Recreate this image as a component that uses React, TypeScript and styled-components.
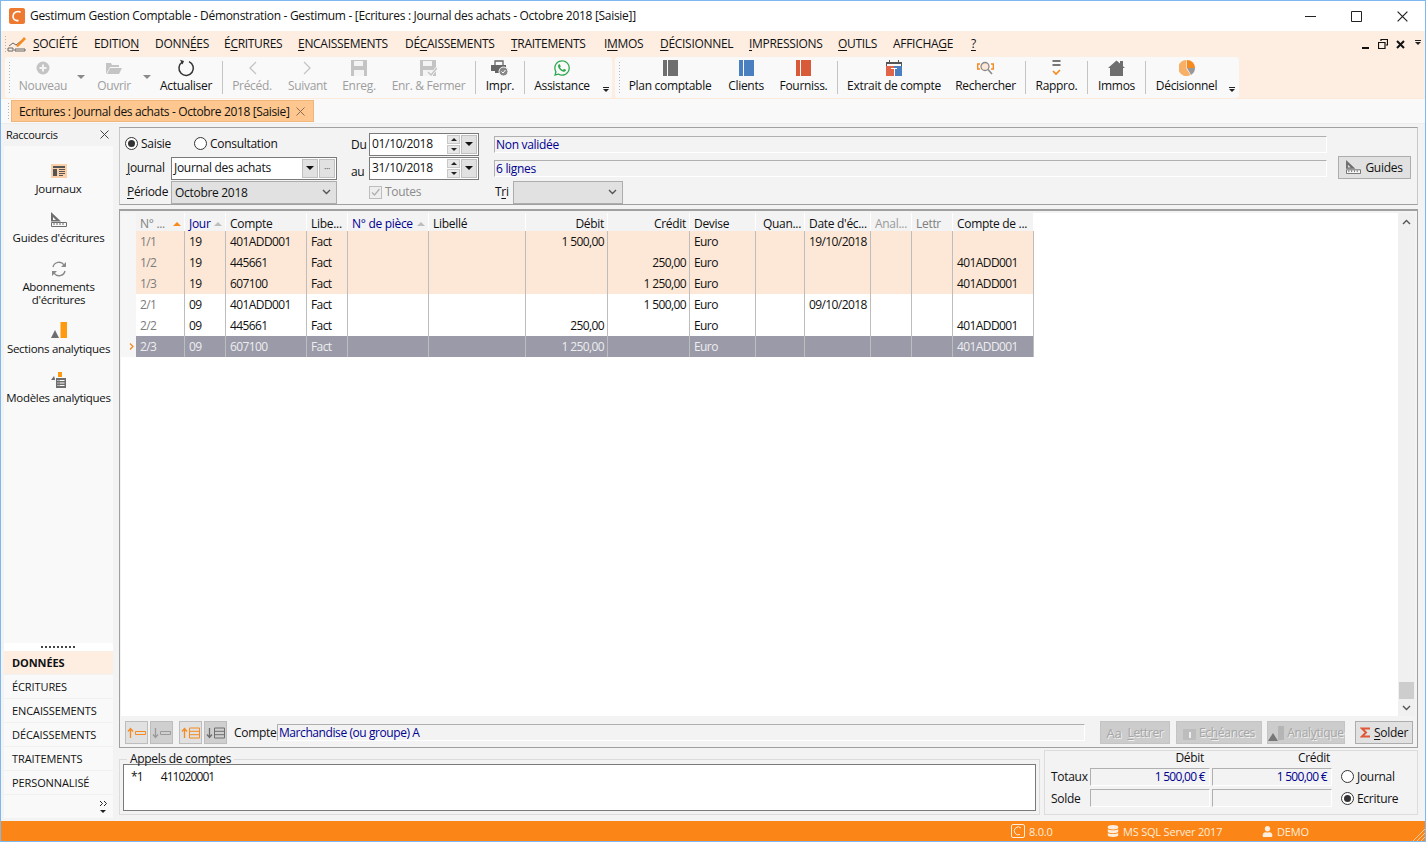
import React from 'react';
import styled, { createGlobalStyle } from 'styled-components';
import { FaWhatsapp, FaDatabase, FaUser } from 'react-icons/fa';

const GlobalStyle = createGlobalStyle`
  html, body { margin: 0; padding: 0; background: #fff; }
  body {
    font-family: "Open Sans", "Liberation Sans", sans-serif;
    font-size: 12px;
    letter-spacing: -0.3px;
    color: #111;
  }
  * { box-sizing: border-box; }
  u { text-underline-offset: 2px; }
`;

const Win = styled.div`
  width: 1426px;
  height: 842px;
  display: flex;
  flex-direction: column;
  border: 1px solid #7db9f0;
  background: #f9f9f9;
  overflow: hidden;
`;

/* title bar */
const TitleBar = styled.div`
  height: 30px;
  flex: none;
  display: flex;
  align-items: center;
  background: #fff;
  padding-left: 8px;
`;
const TitleText = styled.div`
  flex: 1;
  margin-left: 5px;
  padding-bottom: 1px;
  font-size: 12px;
`;
const WinBtn = styled.div`
  width: 46px;
  height: 30px;
  display: flex;
  align-items: center;
  justify-content: center;
`;

/* menu */
const MenuBar = styled.div`
  height: 26px;
  flex: none;
  display: flex;
  align-items: center;
  background: #feeee2;
  padding-left: 3px;
`;
const MenuGrip = styled.div`
  width: 3px;
  height: 18px;
  flex: none;
  background-image: radial-gradient(circle, #b5b5b5 1px, transparent 1px);
  background-size: 3px 3px;
`;
const MenuItem = styled.span<{ $w: number }>`
  width: ${p => p.$w}px;
  flex: none;
  white-space: nowrap;
  padding-bottom: 2px;
`;
const MdiControls = styled.div`
  margin-left: auto;
  display: flex;
  align-items: center;
  gap: 8px;
  padding-right: 2px;
  height: 26px;
`;
const Overflow = styled.div`
  width: 10px;
  height: 8px;
  display: flex;
  flex-direction: column;
  align-items: center;
  gap: 1px;
  &::before { content: ""; width: 6px; height: 1px; background: #222; }
  &::after {
    content: "";
    border-left: 3px solid transparent;
    border-right: 3px solid transparent;
    border-top: 3px solid #222;
  }
`;
const OverflowBox = styled.div<{ $ml?: number }>`
  margin-left: ${p => p.$ml ?? 0}px;
  align-self: flex-end;
  padding-bottom: 3px;
`;

/* toolbars */
const ToolRow = styled.div`
  height: 41px;
  flex: none;
  display: flex;
  background: #feeee2;
  padding-left: 4px;
  gap: 3px;
`;
const ToolGroup = styled.div<{ $w: number }>`
  width: ${p => p.$w}px;
  display: flex;
  align-items: stretch;
  background: #f9f9f9;
  border-radius: 3px;
  padding: 0 0 0 3px;
`;
const Grip = styled.div`
  width: 3px;
  margin: 4px 3px 4px 0;
  flex: none;
  background-image: radial-gradient(circle, #b5b5b5 1px, transparent 1px);
  background-size: 3px 3px;
`;
const ToolBtn = styled.div<{ $w: number; $ml?: number; $off?: boolean }>`
  width: ${p => p.$w}px;
  margin-left: ${p => p.$ml ?? 0}px;
  flex: none;
  display: flex;
  flex-direction: column;
  align-items: center;
  color: ${p => (p.$off ? '#9e9e9e' : '#111')};
  white-space: nowrap;
`;
const ToolIcon = styled.div`
  height: 18px;
  margin-top: 2px;
  display: flex;
  align-items: center;
  justify-content: center;
`;
const ToolLabel = styled.div`
  line-height: 16px;
  margin-top: 1px;
`;
const ToolSep = styled.div`
  width: 1px;
  flex: none;
  margin: 4px 5px;
  background: #c4c4c4;
`;
const DropMark = styled.div<{ $w: number }>`
  width: ${p => p.$w}px;
  flex: none;
  display: flex;
  justify-content: center;
  padding-top: 18px;
  &::after {
    content: "";
    width: 0;
    height: 0;
    border-left: 4px solid transparent;
    border-right: 4px solid transparent;
    border-top: 4px solid #8a8a8a;
  }
`;

/* tab strip */
const TabStrip = styled.div`
  height: 26px;
  flex: none;
  display: flex;
  align-items: center;
  padding-left: 6px;
  background: #f9f9f9;
  border-top: 1px solid #fdeadb;
  border-bottom: 1px solid #ededed;
`;
const TabGrip = styled(Grip)`
  height: 18px;
  margin: 0 1px 0 0;
`;
const Tab = styled.div`
  width: 303px;
  height: 22px;
  display: flex;
  align-items: center;
  justify-content: space-between;
  padding: 0 8px 0 7px;
  background: #fdc78f;
  border: 1px solid #f0b57a;
  white-space: nowrap;
  letter-spacing: -0.36px;
`;

/* body */
const Body = styled.div`
  flex: 1;
  display: flex;
  min-height: 0;
`;
const Sidebar = styled.aside`
  width: 117px;
  flex: none;
  display: flex;
  flex-direction: column;
  background: #f3f3f3;
`;
const SideHead = styled.div`
  height: 22px;
  flex: none;
  display: flex;
  align-items: center;
  justify-content: space-between;
  padding: 0 9px 2px 5px;
  font-size: 11px;
`;
const SideList = styled.div`
  flex: 1;
  margin: 0 5px 0 3px;
  background: #f9f9f9;
  display: flex;
  flex-direction: column;
  padding-top: 14px;
  gap: 6px;
`;
const Shortcut = styled.div`
  display: flex;
  flex-direction: column;
  align-items: center;
  text-align: center;
  line-height: 13px;
  font-size: 11.5px;
  height: 43px;
`;
const Abonnement = styled(Shortcut)`
  height: 56px;
`;
const ShortIcon = styled.div`
  height: 21px;
  margin-bottom: 1px;
  display: flex;
  align-items: center;
  justify-content: center;
`;
const SideDots = styled.div`
  flex: none;
  height: 8px;
  margin: 0 5px 0 3px;
  background: #fff;
  display: flex;
  justify-content: center;
  align-items: center;
  color: #333;
  &::after {
    content: "";
    width: 36px;
    height: 2px;
    background-image: linear-gradient(90deg, #444 2px, transparent 2px);
    background-size: 4px 2px;
  }
`;
const SideTab = styled.div<{ $on?: boolean }>`
  height: 24px;
  flex: none;
  margin: 0 5px 0 3px;
  padding-left: 8px;
  display: flex;
  align-items: center;
  font-size: 11px;
  letter-spacing: -0.1px;
  font-weight: ${p => (p.$on ? 700 : 400)};
  background: ${p => (p.$on ? '#feeee2' : '#f9f9f9')};
  border-bottom: 1px solid #f1f1f1;
`;
const SideMore = styled.div`
  height: 23px;
  flex: none;
  margin: 0 5px 3px 3px;
  background: #f9f9f9;
  display: flex;
  align-items: center;
  justify-content: flex-end;
  padding-right: 5px;
`;

const Main = styled.main`
  flex: 1;
  min-width: 0;
  display: flex;
  flex-direction: column;
  padding: 3px 7px 6px 1px;
  background: #f3f3f3;
`;

/* filter form */
const FormPanel = styled.section`
  height: 78px;
  flex: none;
  border-top: 1px solid #a0a0a0;
  border-left: 1px solid #c8c8c8;
  border-right: 1px solid #c8c8c8;
  border-bottom: 1px solid #a0a0a0;
  display: grid;
  grid-template-columns: 211px 129px 833px 1fr;
  column-gap: 14px;
  grid-template-rows: 24px 24px 24px;
  padding: 4px 6px 0 6px;
  background: #f3f3f3;
`;
const FormCell = styled.div<{ $gap?: number }>`
  display: flex;
  align-items: center;
  gap: ${p => p.$gap ?? 0}px;
  white-space: nowrap;
`;
const Label = styled.span<{ $w?: number; $off?: boolean }>`
  flex: none;
  width: ${p => (p.$w ? `${p.$w}px` : 'auto')};
  color: ${p => (p.$off ? '#8b8b8b' : 'inherit')};
  white-space: nowrap;
`;
const FieldLabel = styled(Label)`
  padding: 0 0 2px 1px;
`;
const LowLabel = styled(Label)`
  padding-top: 7px;
`;
const ComptLabel = styled(Label)`
  padding-left: 5px;
`;
const RadioBox = styled.span<{ $on?: boolean }>`
  width: 13px;
  height: 13px;
  flex: none;
  margin-right: 3px;
  border: 1px solid #333;
  border-radius: 50%;
  background: #fff;
  display: inline-flex;
  align-items: center;
  justify-content: center;
  &::after {
    content: "";
    width: 7px;
    height: 7px;
    border-radius: 50%;
    background: ${p => (p.$on ? '#333' : 'transparent')};
  }
`;
const RadioLine = styled.label<{ $w?: number }>`
  display: inline-flex;
  align-items: center;
  width: ${p => (p.$w ? `${p.$w}px` : 'auto')};
  line-height: 14px;
`;
const FormRadios = styled(FormCell)`
  margin-left: -1px;
  padding-bottom: 1px;
`;
const InputBox = styled.div<{ $w: number }>`
  width: ${p => p.$w}px;
  height: 23px;
  flex: none;
  border: 1px solid #7a7a7a;
  background: #fff;
  display: flex;
  align-items: center;
  padding: 1px;
`;
const InputText = styled.span`
  flex: 1;
  padding-left: 1px;
  padding-bottom: 2px;
`;
const SelectBox = styled.div<{ $w: number }>`
  width: ${p => p.$w}px;
  height: 23px;
  flex: none;
  border: 1px solid #adadad;
  background: #e1e1e1;
  display: flex;
  align-items: center;
  justify-content: space-between;
  padding: 0 5px 0 3px;
`;
const SquareBtn = styled.span<{ $w?: number }>`
  width: ${p => p.$w ?? 16}px;
  height: 19px;
  margin-left: 1px;
  flex: none;
  background: #e1e1e1;
  border: 1px solid #c0c0c0;
  display: inline-flex;
  align-items: center;
  justify-content: center;
  font-size: 9px;
  color: #444;
`;
const Spinner = styled.span`
  width: 13px;
  height: 19px;
  flex: none;
  display: inline-flex;
  flex-direction: column;
  gap: 1px;
`;
const Spin = styled.span<{ $up?: boolean }>`
  flex: 1;
  background: #e8e8e8;
  border: 1px solid #c8c8c8;
  display: flex;
  align-items: center;
  justify-content: center;
  &::after {
    content: "";
    border-left: 3px solid transparent;
    border-right: 3px solid transparent;
    ${p => (p.$up ? 'border-bottom: 3px solid #222;' : 'border-top: 3px solid #222;')}
  }
`;
const Caret = styled.span`
  border-left: 4px solid transparent;
  border-right: 4px solid transparent;
  border-top: 4px solid #111;
`;
const InfoField = styled.div<{ $w?: number; $h?: number }>`
  width: ${p => (p.$w ? `${p.$w}px` : '100%')};
  height: ${p => p.$h ?? 17}px;
  flex: ${p => (p.$w ? 'none' : 1)};
  border-top: 1px solid #b0b0b0;
  border-left: 1px solid #b0b0b0;
  border-bottom: 1px solid #fff;
  border-right: 1px solid #fff;
  background: #f3f3f3;
  color: #000090;
  display: flex;
  align-items: center;
  padding-left: 1px;
  white-space: nowrap;
`;
const CompteField = styled(InfoField)`
  letter-spacing: -0.42px;
  padding-bottom: 1px;
`;
const CheckBox = styled.span`
  width: 13px;
  height: 13px;
  flex: none;
  margin-right: 3px;
  border: 1px solid #bdbdbd;
  background: #eee;
  display: inline-flex;
`;
const GuidesBtn = styled.div`
  width: 73px;
  height: 23px;
  margin: 0 0 2px -3px;
  border: 1px solid #adadad;
  background: #e1e1e1;
  display: flex;
  align-items: center;
  justify-content: center;
  gap: 4px;
`;

/* grid panel */
const GridPanel = styled.section`
  flex: 1;
  min-height: 0;
  margin-top: 4px;
  display: flex;
  flex-direction: column;
  border-top: 2px solid #a0a0a0;
  border-left: 1px solid #a0a0a0;
  border-right: 1px solid #a0a0a0;
  border-bottom: 1px solid #a0a0a0;
  background: #f3f3f3;
`;
const GridScroll = styled.div`
  flex: 1;
  min-height: 0;
  display: flex;
  padding: 2px 2px 0 1px;
`;
const GridArea = styled.div`
  flex: 1;
  background: #fff;
`;
const Sheet = styled.div`
  width: 913px;
  display: flex;
  flex-direction: column;
`;
const SheetRow = styled.div<{ $tone?: 'peach' | 'sel' | 'head' }>`
  display: grid;
  grid-template-columns: 15px 49px 41px 81px 41px 81px 97px 82px 82px 66px 49px 66px 41px 41px 81px;
  height: ${p => (p.$tone === 'head' ? 18 : 21)}px;
  color: ${p => (p.$tone === 'sel' ? '#eeeef0' : '#111')};
`;
const Indicator = styled.div`
  background: #f6f6f6;
  display: flex;
  align-items: center;
  justify-content: flex-end;
  padding-right: 2px;
`;
const HeadCell = styled.div<{ $right?: boolean; $color?: string }>`
  background: #f3f3f3;
  border-right: 1px solid #fff;
  display: flex;
  align-items: center;
  justify-content: ${p => (p.$right ? 'flex-end' : 'flex-start')};
  padding: 3px 3px 0 4px;
  color: ${p => p.$color ?? '#111'};
  white-space: nowrap;
  overflow: hidden;
`;
const SortMark = styled.span<{ $on?: boolean }>`
  margin-left: auto;
  flex: none;
  border-left: 4px solid transparent;
  border-right: 4px solid transparent;
  border-bottom: 4px solid ${p => (p.$on ? '#f58a1f' : '#bdbdbd')};
`;
const Cell = styled.div<{ $right?: boolean; $muted?: boolean; $tone?: string }>`
  background: ${p => (p.$tone === 'peach' ? '#fde8d7' : p.$tone === 'sel' ? '#9a9aa8' : '#fff')};
  border-right: 1px solid #bdbdbd;
  display: flex;
  align-items: center;
  justify-content: ${p => (p.$right ? 'flex-end' : 'flex-start')};
  padding: 0 3px 0 4px;
  color: ${p => (p.$muted ? '#7c7c7c' : 'inherit')};
  white-space: nowrap;
  overflow: hidden;
  letter-spacing: -0.6px;
`;
const SelCell = styled(Cell)`
  color: ${p => (p.$muted ? '#eeeef0' : 'inherit')};
`;
const ScrollBar = styled.div`
  width: 17px;
  flex: none;
  display: flex;
  flex-direction: column;
  justify-content: space-between;
  align-items: center;
  background: #f0f0f0;
  position: relative;
`;
const ScrollEnd = styled.div`
  height: 17px;
  display: flex;
  align-items: center;
  justify-content: center;
`;
const ScrollThumb = styled.div`
  position: absolute;
  left: 1px;
  right: 1px;
  bottom: 17px;
  height: 17px;
  background: #cdcdcd;
`;
const ActionBar = styled.div`
  height: 31px;
  flex: none;
  display: flex;
  align-items: center;
  padding: 2px 4px 0 5px;
`;
const ArrowBtn = styled.div<{ $off?: boolean; $ml?: number }>`
  width: 23px;
  height: 23px;
  flex: none;
  margin-left: ${p => p.$ml ?? 0}px;
  margin-right: 2px;
  border: 1px solid #bdbdbd;
  background: ${p => (p.$off ? '#cfcfcf' : '#e1e1e1')};
  display: flex;
  align-items: center;
  justify-content: center;
`;
const ActionBtn = styled.div<{ $w: number; $off?: boolean; $ml?: number }>`
  width: ${p => p.$w}px;
  height: 23px;
  flex: none;
  margin-left: ${p => p.$ml ?? 0}px;
  border: 1px solid ${p => (p.$off ? '#c4c4c4' : '#adadad')};
  background: ${p => (p.$off ? '#cccccc' : '#e1e1e1')};
  color: ${p => (p.$off ? '#a6a6a6' : '#111')};
  text-shadow: ${p => (p.$off ? '1px 1px 0 #f0f0f0' : 'none')};
  display: flex;
  align-items: center;
  justify-content: center;
  gap: 3px;
  white-space: nowrap;
`;
const AaMark = styled.span`
  font-size: 13px;
  margin-right: 3px;
`;

/* bottom */
const BottomRow = styled.section`
  height: 66px;
  flex: none;
  display: flex;
  gap: 4px;
  margin-top: 1px;
`;
const Fieldset = styled.fieldset`
  flex: 1;
  margin: 0;
  padding: 0 3px 2px;
  border: 1px solid #dcdcdc;
  min-width: 0;
  height: 60px;
  align-self: flex-end;
  position: relative;
`;
const Legend = styled.legend`
  padding: 0 3px;
  margin-left: 4px;
  line-height: 8px;
  height: 8px;
`;
const CallsBox = styled.div`
  height: 47px;
  margin-top: 1px;
  border: 1px solid #7a7a7a;
  background: #fff;
  padding: 3px 7px;
  display: flex;
  gap: 18px;
  letter-spacing: -0.9px;
`;
const TotalsBox = styled.div`
  width: 374px;
  flex: none;
  border: 1px solid #dcdcdc;
  display: grid;
  grid-template-columns: 39px 122px 122px 1fr;
  grid-template-rows: 14px 21px 20px;
  padding: 0 0 0 6px;
  row-gap: 1px;
  margin-top: 1px;
`;
const TotHead = styled.div<{ $pr: number }>`
  text-align: right;
  padding-right: ${p => p.$pr}px;
  line-height: 13px;
`;
const TotCell = styled.div`
  display: flex;
  align-items: center;
  white-space: nowrap;
`;
const TotValue = styled(InfoField)`
  width: 120px;
  flex: none;
  height: 18px;
  justify-content: flex-end;
  padding-right: 4px;
  letter-spacing: -0.7px;
`;
const TotRadio = styled(TotCell)`
  padding-left: 7px;
`;

/* status bar */
const StatusBar = styled.footer`
  height: 20px;
  flex: none;
  background: #fb8516;
  color: #fdeedd;
  display: flex;
  align-items: center;
  padding-left: 1010px;
  position: relative;
  letter-spacing: -0.2px;
  font-size: 11px;
`;
const StatusItem = styled.div<{ $w: number }>`
  width: ${p => p.$w}px;
  flex: none;
  display: flex;
  align-items: center;
  gap: 4px;
`;
const ResizeGrip = styled.svg`
  position: absolute;
  right: 0;
  bottom: 0;
`;

const ICON_GREY = '#6e6e6e';
const ICON_OFF = '#c4c4c4';

const Logo = () => (
  <svg width="16" height="16" viewBox="0 0 16 16">
    <rect width="16" height="16" rx="2" fill="#ee7a32" />
    <path d="M11.5 4.2A5 5 0 0 0 4 8a4.6 4.6 0 0 0 4 4.6h1.5" fill="none" stroke="#fff" strokeWidth="1.6" />
  </svg>
);

const CloseX = ({ size = 9, color = '#444' }: { size?: number; color?: string }) => (
  <svg width={size} height={size} viewBox="0 0 9 9">
    <path d="M.5.5l8 8M8.5.5l-8 8" stroke={color} fill="none" />
  </svg>
);

const EditIcon = () => (
  <svg width="20" height="18" viewBox="0 0 20 18">
    <path d="M1 16v-3h5v3zM8 16v-2h10v2z" fill="none" stroke="#666" />
    <path d="M2 11l4-3 3 2 5-4" fill="none" stroke="#666" />
    <path d="M9 11l8-9 2 2-8 8z" fill="#f58a1f" />
  </svg>
);

const PlusIcon = () => (
  <svg width="16" height="16" viewBox="0 0 16 16">
    <circle cx="8" cy="8" r="6.5" fill={ICON_OFF} />
    <path d="M8 4.5v7M4.5 8h7" stroke="#f4f4f4" strokeWidth="2" />
  </svg>
);
const FolderIcon = () => (
  <svg width="18" height="14" viewBox="0 0 18 14">
    <path d="M1 13V2h5l1 2h7v2H5zM2 13l3-6h12l-3 6z" fill={ICON_OFF} />
  </svg>
);
const RefreshIcon = () => (
  <svg width="18" height="18" viewBox="0 0 18 18">
    <path d="M5.2 3.2A7.2 7.2 0 1 0 12 2.6" fill="none" stroke="#333" strokeWidth="1.5" />
    <path d="M3 .8l4 1.2-1.4 3.6z" fill="#333" />
  </svg>
);
const Chevron = ({ left }: { left?: boolean }) => (
  <svg width="9" height="14" viewBox="0 0 9 14">
    <path d={left ? 'M8 1L2 7l6 6' : 'M1 1l6 6-6 6'} fill="none" stroke={ICON_OFF} strokeWidth="1.3" />
  </svg>
);
const SaveIcon = ({ check }: { check?: boolean }) => (
  <svg width="17" height="16" viewBox="0 0 17 16">
    <path d="M0 0h16v16H0z" fill={ICON_OFF} />
    <path d="M3 1h9v5H3zM3 10h10v6H3z" fill="#f4f4f4" />
    {check && <path d="M8 12l3 3 6-7" fill="none" stroke="#f4f4f4" strokeWidth="3" />}
    {check && <path d="M8 12l3 3 6-7" fill="none" stroke={ICON_OFF} strokeWidth="1.4" />}
  </svg>
);
const PrintIcon = () => (
  <svg width="18" height="17" viewBox="0 0 18 17">
    <path d="M4 5V1h8v4" fill="none" stroke="#666" strokeWidth="1.3" />
    <path d="M0 5h15v8H4v-2H0z" fill="#666" />
    <circle cx="12.5" cy="11.5" r="4.5" fill="#888" stroke="#f9f9f9" />
    <path d="M10.5 11.5l1.5 1.5 2.5-3" fill="none" stroke="#fff" />
  </svg>
);
const BookIcon = ({ color }: { color: string }) => (
  <svg width="15" height="16" viewBox="0 0 15 16">
    <path d="M0 0h4v16H0z" fill={color} />
    <path d="M5 0h10v16H5z" fill={color} />
  </svg>
);
const CalendarIcon = () => (
  <svg width="16" height="16" viewBox="0 0 16 16">
    <path d="M0 2h16v5H0z" fill="#555" />
    <path d="M3 0h1v3H3zM12 0h1v3h-1z" fill="#555" />
    <path d="M1 4h14v2H1z" fill="#f9f9f9" />
    <path d="M0 6h8v10H0z" fill="#e0654a" />
    <path d="M8 6h8v10H8z" fill="#4a7fc0" />
    <path d="M5 8h6v1H9v7H8V9H5z" fill="#fff" />
  </svg>
);
const SearchIcon = () => (
  <svg width="17" height="15" viewBox="0 0 17 15">
    <path d="M3 3H.7v5H3M14 3h2.3v5H14" fill="none" stroke="#f58a1f" strokeWidth="1.4" />
    <circle cx="8" cy="5.5" r="4" fill="#fde8d7" stroke="#8a8a8a" strokeWidth="1.3" />
    <path d="M11 8.5l4 4.5" stroke="#8a8a8a" strokeWidth="1.6" />
  </svg>
);
const RapproIcon = () => (
  <svg width="9" height="16" viewBox="0 0 9 16">
    <path d="M.5 0h8v2h-8zM.5 4h8v2h-8z" fill="#777" />
    <path d="M1 11l3 3 4-4" fill="none" stroke="#f58a1f" strokeWidth="1.7" />
  </svg>
);
const HomeIcon = () => (
  <svg width="17" height="16" viewBox="0 0 17 16">
    <path d="M0 8l8.5-7.5L12 3.5V1h3v5.2L17 8H15v8H2V8z" fill={ICON_GREY} />
  </svg>
);
const PieIcon = () => (
  <svg width="16" height="16" viewBox="0 0 16 16">
    <path d="M8 8V0a8 8 0 0 1 8 8z" fill="#f58a1f" />
    <path d="M8 8h8a8 8 0 0 1-4 6.9z" fill="#999" />
    <path d="M7.4 8.6V0a8 8 0 1 0 4 14.9z" fill="#f8b066" />
  </svg>
);
const JournalIcon = () => (
  <svg width="16" height="14" viewBox="0 0 16 14">
    <path d="M0 0h16v14H0z" fill="#fbcfa8" />
    <path d="M2 2h12v2H2zM2 5h4v7H2zM8 5h6v1H8zM8 7h6v1H8zM8 9h6v1H8zM8 11h4v1H8z" fill="#555" />
  </svg>
);
const SquareRuleIcon = ({ width = 16, height = 15 }: { width?: number; height?: number }) => (
  <svg width={width} height={height} viewBox="0 0 16 15">
    <path d="M0 0l10 9.5H0zM2 5v3h3z" fill={ICON_GREY} fillRule="evenodd" />
    <path d="M.5 10.5h15v4H.5z" fill="#f9f9f9" stroke={ICON_GREY} />
    <path d="M3 11v2M6 11v2M9 11v2M12 11v2" stroke={ICON_GREY} />
  </svg>
);
const CycleIcon = () => (
  <svg width="16" height="16" viewBox="0 0 16 16">
    <path d="M2 6a6.2 6.2 0 0 1 11-2.2M14 10a6.2 6.2 0 0 1-11 2.2" fill="none" stroke="#8a8a8a" strokeWidth="1.4" />
    <path d="M15 1v5h-5zM1 15v-5h5z" fill="#8a8a8a" />
  </svg>
);
const SectionIcon = () => (
  <svg width="16" height="17" viewBox="0 0 16 17">
    <path d="M0 16l4-8 4 8z" fill={ICON_GREY} />
    <path d="M9.500 0H16v16H9.500z" fill="#ff9a10" />
  </svg>
);
const ModelIcon = () => (
  <svg width="15" height="16" viewBox="0 0 15 16">
    <path d="M0 8l3-4 1 3v1z" fill={ICON_GREY} />
    <path d="M7 0h4v5H7z" fill="#ff9a10" />
    <path d="M5 6h10v10H5z" fill={ICON_GREY} />
    <path d="M6.500 8h1v1h-1zM8.500 8h5v1h-5zM6.500 10.500h1v1h-1zM8.500 10.500h5v1h-5zM6.500 13h1v1h-1zM8.500 13h5v1h-5z" fill="#fff" />
  </svg>
);
const ArrowLines = ({ down, list, color }: { down?: boolean; list?: boolean; color: string }) => (
  <svg width="19" height="12" viewBox="0 0 19 12">
    <path d={down ? 'M3.500 1v9M1 7.500l2.500 3 2.500-3' : 'M3.500 11V2M1 4.500l2.500-3 2.500 3'} fill="none" stroke={color} strokeWidth="1.3" />
    {list
      ? <path d="M8.500 1h10v10h-10zM8.500 4.300h10M8.500 7.700h10" fill="none" stroke={color} />
      : <path d="M8.500 4.500h10v3h-10z" fill="none" stroke={color} />}
  </svg>
);
const SigmaIcon = () => (
  <svg width="11" height="11" viewBox="0 0 11 11">
    <path d="M10 1.500H2l4 4-4 4h8" fill="none" stroke="#e0583a" strokeWidth="2" />
  </svg>
);
const VChevron = ({ up }: { up?: boolean }) => (
  <svg width="9" height="6" viewBox="0 0 9 6">
    <path d={up ? 'M1 5l3.500-3.500L8 5' : 'M1 1l3.500 3.500L8 1'} fill="none" stroke="#555" strokeWidth="1.4" />
  </svg>
);
const StatusLogo = () => (
  <svg width="14" height="14" viewBox="0 0 14 14">
    <rect x=".5" y=".5" width="13" height="13" rx="1.5" fill="none" stroke="#fdeedd" />
    <path d="M10 4a4 4 0 1 0-1 6.500" fill="none" stroke="#fdeedd" />
  </svg>
);

type ToolDef = { label: string; w: number; ml?: number; off?: boolean; icon: React.ReactNode };

const firstTools: (ToolDef | 'sep' | number)[] = [
  { label: 'Nouveau', w: 58, off: true, icon: <PlusIcon /> },
  18,
  { label: 'Ouvrir', w: 48, off: true, icon: <FolderIcon /> },
  17,
  { label: 'Actualiser', w: 62, icon: <RefreshIcon /> },
  'sep',
  { label: 'Précéd.', w: 48, off: true, icon: <Chevron left /> },
  { label: 'Suivant', w: 49, ml: 7, off: true, icon: <Chevron /> },
  { label: 'Enreg.', w: 42, ml: 6, off: true, icon: <SaveIcon /> },
  { label: 'Enr. & Fermer', w: 83, ml: 7, off: true, icon: <SaveIcon check /> },
  'sep',
  { label: 'Impr.', w: 38, icon: <PrintIcon /> },
  'sep',
  { label: 'Assistance', w: 64, icon: <FaWhatsapp size={18} color="#2fa84f" /> },
];
const secondTools: (ToolDef | 'sep')[] = [
  { label: 'Plan comptable', w: 92, icon: <BookIcon color={ICON_GREY} /> },
  { label: 'Clients', w: 46, ml: 7, icon: <BookIcon color="#4a7fc0" /> },
  { label: 'Fourniss.', w: 57, ml: 6, icon: <BookIcon color="#d95a38" /> },
  'sep',
  { label: 'Extrait de compte', w: 102, icon: <CalendarIcon /> },
  { label: 'Rechercher', w: 69, ml: 6, icon: <SearchIcon /> },
  'sep',
  { label: 'Rappro.', w: 51, icon: <RapproIcon /> },
  'sep',
  { label: 'Immos', w: 47, icon: <HomeIcon /> },
  'sep',
  { label: 'Décisionnel', w: 71, icon: <PieIcon /> },
];

const renderTool = (t: ToolDef | 'sep' | number, i: number) => {
  if (t === 'sep') return <ToolSep key={i} />;
  if (typeof t === 'number') return <DropMark key={i} $w={t} />;
  return (
    <ToolBtn key={t.label} $w={t.w} $ml={t.ml} $off={t.off}>
      <ToolIcon>{t.icon}</ToolIcon>
      <ToolLabel>{t.label}</ToolLabel>
    </ToolBtn>
  );
};

const menu: [React.ReactNode, number][] = [
  [<><u>S</u>OCIÉTÉ</>, 61],
  [<>EDITIO<u>N</u></>, 61],
  [<>DONN<u>É</u>ES</>, 69],
  [<>É<u>C</u>RITURES</>, 74],
  [<><u>E</u>NCAISSEMENTS</>, 107],
  [<>DÉ<u>C</u>AISSEMENTS</>, 106],
  [<><u>T</u>RAITEMENTS</>, 93],
  [<>I<u>M</u>MOS</>, 56],
  [<><u>D</u>ÉCISIONNEL</>, 89],
  [<><u>I</u>MPRESSIONS</>, 89],
  [<><u>O</u>UTILS</>, 55],
  [<>AFFICHA<u>G</u>E</>, 78],
  [<u>?</u>, 14],
];

const headers: { t: string; right?: boolean; color?: string; sort?: 'on' | 'off' }[] = [
  { t: 'N° ...', color: '#808080', sort: 'on' },
  { t: 'Jour', color: '#000090', sort: 'off' },
  { t: 'Compte' },
  { t: 'Libe...' },
  { t: 'N° de pièce', color: '#000090', sort: 'off' },
  { t: 'Libellé' },
  { t: 'Débit', right: true },
  { t: 'Crédit', right: true },
  { t: 'Devise' },
  { t: 'Quan...', right: true },
  { t: "Date d'éc..." },
  { t: 'Anal...', color: '#9a9a9a' },
  { t: 'Lettr', color: '#808080' },
  { t: 'Compte de ...' },
];

type Line = { tone?: 'peach' | 'sel'; cells: string[] };
const lines: Line[] = [
  { tone: 'peach', cells: ['1/1', '19', '401ADD001', 'Fact', '', '', '1 500,00', '', 'Euro', '', '19/10/2018', '', '', ''] },
  { tone: 'peach', cells: ['1/2', '19', '445661', 'Fact', '', '', '', '250,00', 'Euro', '', '', '', '', '401ADD001'] },
  { tone: 'peach', cells: ['1/3', '19', '607100', 'Fact', '', '', '', '1 250,00', 'Euro', '', '', '', '', '401ADD001'] },
  { cells: ['2/1', '09', '401ADD001', 'Fact', '', '', '', '1 500,00', 'Euro', '', '09/10/2018', '', '', ''] },
  { cells: ['2/2', '09', '445661', 'Fact', '', '', '250,00', '', 'Euro', '', '', '', '', '401ADD001'] },
  { tone: 'sel', cells: ['2/3', '09', '607100', 'Fact', '', '', '1 250,00', '', 'Euro', '', '', '', '', '401ADD001'] },
];

const sideTabs = ['DONNÉES', 'ÉCRITURES', 'ENCAISSEMENTS', 'DÉCAISSEMENTS', 'TRAITEMENTS', 'PERSONNALISÉ'];

export default function App() {
  return (
    <>
      <GlobalStyle />
      <Win>
        <TitleBar>
          <Logo />
          <TitleText>Gestimum Gestion Comptable - Démonstration - Gestimum - [Ecritures : Journal des achats - Octobre 2018 [Saisie]]</TitleText>
          <WinBtn><svg width="11" height="11"><path d="M0 5.500h11" stroke="#222" /></svg></WinBtn>
          <WinBtn><svg width="11" height="11"><path d="M.5.500h10v10H.5z" fill="none" stroke="#222" /></svg></WinBtn>
          <WinBtn><CloseX size={11} color="#222" /></WinBtn>
        </TitleBar>

        <MenuBar>
          <MenuGrip />
          <EditIcon />
          <MenuItem $w={6} />
          {menu.map(([m, w], i) => <MenuItem key={i} $w={w}>{m}</MenuItem>)}
          <MdiControls>
            <svg width="8" height="9"><path d="M0 7h7v2H0z" fill="#111" /></svg>
            <svg width="10" height="10"><path d="M3 2V.5h6.500V6H8M.5 3.500h6.500V9.500H.5z" fill="none" stroke="#111" strokeWidth="1.2" /></svg>
            <svg width="9" height="9"><path d="M1 1l7 7M8 1L1 8" stroke="#111" strokeWidth="2" /></svg>
            <Overflow />
          </MdiControls>
        </MenuBar>

        <ToolRow>
          <ToolGroup $w={607}>
            <Grip />
            {firstTools.map(renderTool)}
            <OverflowBox $ml={7}><Overflow /></OverflowBox>
          </ToolGroup>
          <ToolGroup $w={624}>
            <Grip />
            {secondTools.map(renderTool)}
            <OverflowBox $ml={5}><Overflow /></OverflowBox>
          </ToolGroup>
        </ToolRow>

        <TabStrip>
          <TabGrip />
          <Tab>
            Ecritures : Journal des achats - Octobre 2018 [Saisie]
            <CloseX color="#8a6a50" />
          </Tab>
        </TabStrip>

        <Body>
          <Sidebar>
            <SideHead>Raccourcis<CloseX /></SideHead>
            <SideList>
              <Shortcut><ShortIcon><JournalIcon /></ShortIcon>Journaux</Shortcut>
              <Shortcut><ShortIcon><SquareRuleIcon /></ShortIcon>Guides d'écritures</Shortcut>
              <Abonnement><ShortIcon><CycleIcon /></ShortIcon>Abonnements<br />d'écritures</Abonnement>
              <Shortcut><ShortIcon><SectionIcon /></ShortIcon>Sections analytiques</Shortcut>
              <Shortcut><ShortIcon><ModelIcon /></ShortIcon>Modèles analytiques</Shortcut>
            </SideList>
            <SideDots />
            {sideTabs.map((s, i) => <SideTab key={s} $on={i === 0}>{s}</SideTab>)}
            <SideMore>
              <svg width="9" height="14" viewBox="0 0 9 14">
                <path d="M1 1l2.500 2.500L1 6M5 1l2.500 2.500L5 6" fill="none" stroke="#222" />
                <path d="M1 10h6l-3 3z" fill="#222" />
              </svg>
            </SideMore>
          </Sidebar>

          <Main>
            <FormPanel>
              <FormRadios>
                <RadioLine $w={69}><RadioBox $on />Saisie</RadioLine>
                <RadioLine><RadioBox />Consultation</RadioLine>
              </FormRadios>
              <FormCell>
                <Label $w={18}>Du</Label>
                <InputBox $w={110}>
                  <InputText>01/10/2018</InputText>
                  <Spinner><Spin $up /><Spin /></Spinner>
                  <SquareBtn><Caret /></SquareBtn>
                </InputBox>
              </FormCell>
              <FormCell><InfoField>Non validée</InfoField></FormCell>
              <div />

              <FormCell>
                <FieldLabel $w={45}><u>J</u>ournal</FieldLabel>
                <InputBox $w={166}>
                  <InputText>Journal des achats</InputText>
                  <SquareBtn><Caret /></SquareBtn>
                  <SquareBtn>···</SquareBtn>
                </InputBox>
              </FormCell>
              <FormCell>
                <LowLabel $w={18}>au</LowLabel>
                <InputBox $w={110}>
                  <InputText>31/10/2018</InputText>
                  <Spinner><Spin $up /><Spin /></Spinner>
                  <SquareBtn><Caret /></SquareBtn>
                </InputBox>
              </FormCell>
              <FormCell><InfoField>6 lignes</InfoField></FormCell>
              <FormCell>
                <GuidesBtn><SquareRuleIcon width={15} height={14} />Guides</GuidesBtn>
              </FormCell>

              <FormCell>
                <FieldLabel $w={45}><u>P</u>ériode</FieldLabel>
                <SelectBox $w={166}>
                  Octobre 2018
                  <VChevron />
                </SelectBox>
              </FormCell>
              <FormCell>
                <Label $w={18} />
                <RadioLine>
                  <CheckBox>
                    <svg width="11" height="11" viewBox="0 0 11 11"><path d="M2 5.500l2.500 2.500L9.500 2" fill="none" stroke="#b0b0b0" strokeWidth="1.3" /></svg>
                  </CheckBox>
                  <Label $off>Toutes</Label>
                </RadioLine>
              </FormCell>
              <FormCell $gap={4}>
                <FieldLabel>T<u>r</u>i</FieldLabel>
                <SelectBox $w={110}>
                  <span />
                  <VChevron />
                </SelectBox>
              </FormCell>
              <div />
            </FormPanel>

            <GridPanel>
              <GridScroll>
                <GridArea>
                  <Sheet>
                    <SheetRow $tone="head">
                      <Indicator />
                      {headers.map(h => (
                        <HeadCell key={h.t} $right={h.right} $color={h.color}>
                          {h.t}
                          {h.sort && <SortMark $on={h.sort === 'on'} />}
                        </HeadCell>
                      ))}
                    </SheetRow>
                    {lines.map((l, i) => (
                      <SheetRow key={i} $tone={l.tone}>
                        <Indicator>
                          {l.tone === 'sel' && (
                            <svg width="5" height="7" viewBox="0 0 5 7"><path d="M1 .5L4 3.500 1 6.500" fill="none" stroke="#f58a1f" strokeWidth="1.3" /></svg>
                          )}
                        </Indicator>
                        {l.cells.map((c, j) => {
                          const right = j === 6 || j === 7;
                          return l.tone === 'sel'
                            ? <SelCell key={j} $tone="sel" $right={right} $muted={j === 0}>{c}</SelCell>
                            : <Cell key={j} $tone={l.tone} $right={right} $muted={j === 0}>{c}</Cell>;
                        })}
                      </SheetRow>
                    ))}
                  </Sheet>
                </GridArea>
                <ScrollBar>
                  <ScrollEnd><VChevron up /></ScrollEnd>
                  <ScrollThumb />
                  <ScrollEnd><VChevron /></ScrollEnd>
                </ScrollBar>
              </GridScroll>
              <ActionBar>
                <ArrowBtn><ArrowLines color="#f58a1f" /></ArrowBtn>
                <ArrowBtn $off><ArrowLines down color="#9a9a9a" /></ArrowBtn>
                <ArrowBtn $ml={4}><ArrowLines list color="#f58a1f" /></ArrowBtn>
                <ArrowBtn $off><ArrowLines down list color="#6e6e6e" /></ArrowBtn>
                <ComptLabel $w={48}>Compte</ComptLabel>
                <CompteField $w={808}>Marchandise (ou groupe) A</CompteField>
                <ActionBtn $w={70} $off $ml={15}>
                  <AaMark>Aa</AaMark>
                  <span><u>L</u>ettrer</span>
                </ActionBtn>
                <ActionBtn $w={86} $off $ml={6}>
                  <svg width="13" height="14" viewBox="0 0 13 14"><path d="M0 3h13v11H0z" fill="#bdbdbd" /><path d="M6 6h2v6H6z" fill="#eee" /></svg>
                  <span>Ec<u>h</u>éances</span>
                </ActionBtn>
                <ActionBtn $w={78} $off $ml={5}>
                  <svg width="16" height="16" viewBox="0 0 16 16"><path d="M0 16l5-8 5 8z" fill="#777" /><path d="M10 1h6v14h-6z" fill="#b5b5b5" /></svg>
                  <span>Anal<u>y</u>tique</span>
                </ActionBtn>
                <ActionBtn $w={58} $ml={10}><SigmaIcon /><span><u>S</u>older</span></ActionBtn>
              </ActionBar>
            </GridPanel>

            <BottomRow>
              <Fieldset>
                <Legend>Appels de comptes</Legend>
                <CallsBox><span>*1</span><span>411020001</span></CallsBox>
              </Fieldset>
              <TotalsBox>
                <div />
                <TotHead $pr={8}>Débit</TotHead>
                <TotHead $pr={4}>Crédit</TotHead>
                <div />
                <TotCell>Totaux</TotCell>
                <TotCell><TotValue>1 500,00 €</TotValue></TotCell>
                <TotCell><TotValue>1 500,00 €</TotValue></TotCell>
                <TotRadio><RadioBox />Journal</TotRadio>
                <TotCell>Solde</TotCell>
                <TotCell><TotValue /></TotCell>
                <TotCell><TotValue /></TotCell>
                <TotRadio><RadioBox $on />Ecriture</TotRadio>
              </TotalsBox>
            </BottomRow>
          </Main>
        </Body>

        <StatusBar>
          <StatusItem $w={96}><StatusLogo />8.0.0</StatusItem>
          <StatusItem $w={155}><FaDatabase size={12} />MS SQL Server 2017</StatusItem>
          <StatusItem $w={60}><FaUser size={11} />DEMO</StatusItem>
          <ResizeGrip width="13" height="13" viewBox="0 0 13 13">
            <path d="M13 1L1 13M13 5L5 13M13 9L9 13" stroke="#f7c99a" strokeWidth="1" />
          </ResizeGrip>
        </StatusBar>
      </Win>
    </>
  );
}
